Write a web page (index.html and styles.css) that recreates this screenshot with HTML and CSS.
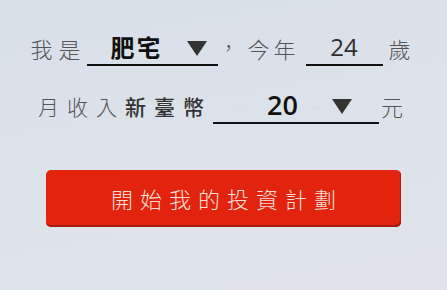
FILE: index.html
```html
<!DOCTYPE html>
<html lang="zh-Hant">
<head>
<meta charset="utf-8">
<title>投資計劃</title>
<link rel="stylesheet" href="styles.css">
</head>
<body>
<main class="page">
  <div class="rows">
    <div class="row row-1">
      <span class="label label-me">我是</span>
      <div class="field field-role">
        <span class="value value-role">肥宅</span>
        <svg class="arrow arrow-role" width="20" height="15" viewBox="0 0 20 15"><polygon points="0,0 20,0 10,15" fill="#333"/></svg>
      </div>
      <span class="label label-comma">，</span>
      <span class="label label-age">今年</span>
      <div class="field field-age">
        <span class="value value-age">24</span>
      </div>
      <span class="label label-sui">歲</span>
    </div>
    <div class="row row-2">
      <span class="label label-income"><span class="thin">月收入</span><span class="strong">新臺幣</span></span>
      <div class="field field-income">
        <span class="ghost">-</span>
        <span class="value value-income">20</span>
        <span class="ghost ghost-2">-</span>
        <svg class="arrow arrow-income" width="20" height="15" viewBox="0 0 20 15"><polygon points="0,0 20,0 10,15" fill="#333"/></svg>
      </div>
      <span class="label label-yuan">元</span>
    </div>
  </div>
  <button class="start-btn" type="button">開始我的投資計劃</button>
</main>
</body>
</html>
```

FILE: styles.css
```css
html, body {
  margin: 0;
  padding: 0;
}
body {
  width: 447px;
  height: 290px;
  overflow: hidden;
  background: linear-gradient(170deg, #d7dfe9 0%, #dde3ea 55%, #e0e4e9 100%);
  font-family: "Noto Sans CJK TC", "Noto Sans", sans-serif;
}
.page {
  display: flex;
  flex-direction: column;
  padding-top: 26px;
}
.rows {
  display: flex;
  flex-direction: column;
  gap: 18px;
  padding-right: 6px;
}
.row {
  display: flex;
  justify-content: center;
  align-items: flex-end;
  height: 40px;
}
.label {
  line-height: 28px;
  padding-bottom: 4px;
  color: #555;
  font-size: 22px;
  font-weight: 300;
  white-space: nowrap;
}
.label-me {
  width: 56px;
  letter-spacing: 6px;
}
.label-comma {
  width: 22px;
  text-align: center;
  font-size: 20px;
  margin-right: 8px;
}
.label-age {
  width: 58px;
  letter-spacing: 4px;
}
.label-sui {
  margin-left: 6px;
  width: 22px;
}
.field {
  box-sizing: border-box;
  height: 40px;
  border-bottom: 2px solid #111;
  display: flex;
  align-items: center;
  padding-top: 4px;
}
.value {
  font-family: "Open Sans", "Noto Sans CJK TC", sans-serif;
  line-height: 30px;
}
.field-role {
  width: 131px;
}
.value-role {
  font-family: "Noto Sans CJK TC", sans-serif;
  font-size: 24px;
  font-weight: 700;
  letter-spacing: 2px;
  color: #111;
  margin-left: 24px;
}
.arrow {
  display: block;
}
.arrow-role {
  margin-left: 24px;
  margin-top: 2px;
}
.field-age {
  width: 77px;
  justify-content: center;
}
.value-age {
  font-size: 24px;
  font-weight: 500;
  color: #2e2e2e;
}
.label-income {
  width: 175px;
  font-size: 21px;
  letter-spacing: 8px;
}
.label-income .strong {
  color: #333;
  font-weight: 500;
}
.field-income {
  width: 166px;
}
.ghost {
  color: #d4dae2;
  font-size: 16px;
  margin-left: 24px;
  width: 30px;
}
.ghost-2 {
  margin-left: 16px;
  width: 16px;
}
.value-income {
  font-size: 27px;
  font-weight: 600;
  color: #111;
}
.arrow-income {
  margin-left: 2px;
  margin-top: 2px;
}
.label-yuan {
  margin-left: 2px;
  width: 22px;
}
.start-btn {
  align-self: flex-start;
  margin: 46px 0 0 46px;
  width: 355px;
  height: 57px;
  box-sizing: border-box;
  border: none;
  border-radius: 5px;
  background: #e2240f;
  box-shadow: inset -1px -2px 0 #a61b12;
  color: #f6e0da;
  font-family: "Noto Sans CJK TC", sans-serif;
  font-size: 22px;
  font-weight: 300;
  letter-spacing: 7px;
  padding: 0 0 2px 7px;
  cursor: pointer;
}
```
